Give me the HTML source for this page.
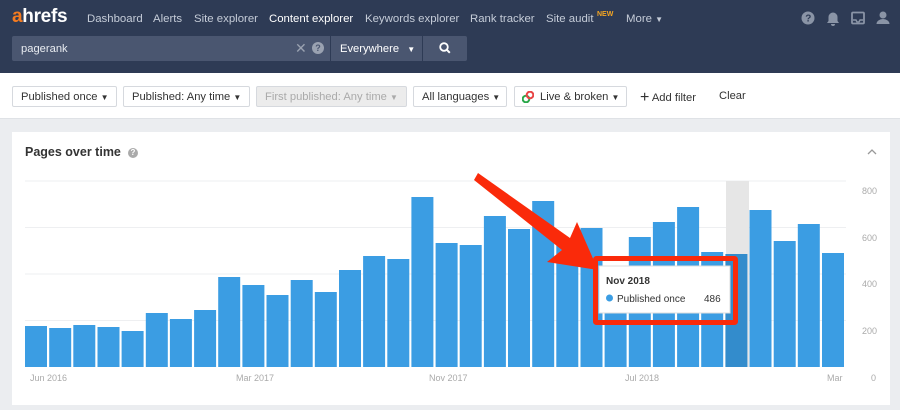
<!DOCTYPE html>
<html><head><meta charset="utf-8"><style>
*{box-sizing:border-box;margin:0;padding:0}
body{width:900px;height:410px;background:#ebedf0;font-family:"Liberation Sans",sans-serif;position:relative;overflow:hidden}
.nav{position:absolute;left:0;top:0;width:900px;height:73px;background:#2e3b55}
.nav .l{position:absolute;top:13px;font-size:11.4px;color:#c5ccd8;white-space:nowrap}
.logo{position:absolute;left:12px;top:6px;font-size:19px;font-weight:bold;color:#fff;letter-spacing:-0.3px}
.logo b{color:#f47b20}
.search{position:absolute;left:12px;top:36px;width:318px;height:25px;background:#4a5670;border-radius:2px 0 0 2px;color:#e8ebf0;font-size:11.2px;padding:7px 9px}
.ev{position:absolute;left:331px;top:36px;width:91px;height:25px;background:#4a5670;color:#fff;font-size:11.2px;padding:7px 9px;white-space:nowrap}
.sb{position:absolute;left:423px;top:36px;width:44px;height:25px;background:#4a5670;border-radius:0 2px 2px 0}
.fb{position:absolute;left:0;top:73px;width:900px;height:46px;background:#fff;border-bottom:1px solid #dfe2e6}
.f{position:absolute;top:13px;height:21px;border:1px solid #d6d9de;border-radius:2px;font-size:11.2px;color:#333;padding:4px 8px;background:#fff;white-space:nowrap}
.card{position:absolute;left:12px;top:132px;width:878px;height:273px;background:#fff}
.ax{font-size:9px;fill:#aaa;font-family:"Liberation Sans",sans-serif}
</style></head><body>
<div class="nav">
<div class="logo"><b>a</b>hrefs</div>
<div class="l" style="left:87px">Dashboard</div>
<div class="l" style="left:153px">Alerts</div>
<div class="l" style="left:194px">Site explorer</div>
<div class="l" style="left:269px;color:#fff">Content explorer</div>
<div class="l" style="left:365px">Keywords explorer</div>
<div class="l" style="left:470px">Rank tracker</div>
<div class="l" style="left:546px">Site audit</div>
<div style="position:absolute;left:597px;top:11px;font-size:7px;font-weight:bold;color:#f5a623">NEW</div>
<div class="l" style="left:626px">More <span style="font-size:8px">▼</span></div>
<svg style="position:absolute;left:800px;top:10px" width="92" height="18">
<circle cx="8" cy="8" r="6.5" fill="#8a94a6"/><text x="5.3" y="11.5" font-size="10" font-weight="bold" fill="#2e3b55" font-family="Liberation Sans">?</text>
<path d="M27 13h12l-1.5-2v-4a4.5 4.5 0 0 0-9 0v4z M31 14h4a2 2 0 0 1-4 0z" fill="#8a94a6"/>
<rect x="52" y="2.5" width="12" height="11" rx="1" fill="none" stroke="#8a94a6" stroke-width="1.8"/><path d="M53 10h3l1 2h2l1-2h3" fill="none" stroke="#8a94a6" stroke-width="1.5"/>
<circle cx="83" cy="5" r="3.5" fill="#8a94a6"/><path d="M76.5 14a6.5 5 0 0 1 13 0z" fill="#8a94a6"/>
</svg>
<div class="search">pagerank<span style="position:absolute;left:283px;top:4px;color:#9aa2b1;font-size:14px">✕</span><span style="position:absolute;left:300px;top:6px;width:12px;height:12px;border-radius:50%;background:#9aa2b1;color:#4a5670;font-size:9px;font-weight:bold;text-align:center;line-height:12px">?</span></div>
<div class="ev">Everywhere <span style="font-size:8px;margin-left:5px">▼</span></div>
<div class="sb"><svg width="44" height="25"><circle cx="21" cy="11" r="3.8" fill="none" stroke="#fff" stroke-width="1.8"/><path d="M23.8 13.8l3 3" stroke="#fff" stroke-width="2"/></svg></div>
</div>
<div class="fb">
<div class="f" style="left:12px;width:105px">Published once <span style="font-size:8px">▼</span></div>
<div class="f" style="left:123px;width:127px">Published: Any time <span style="font-size:8px">▼</span></div>
<div class="f" style="left:256px;width:151px;background:#ececec;color:#aaa">First published: Any time <span style="font-size:8px">▼</span></div>
<div class="f" style="left:413px;width:94px">All languages <span style="font-size:8px">▼</span></div>
<div class="f" style="left:514px;width:113px;padding-left:25px"><svg style="position:absolute;left:7px;top:4px" width="12" height="12"><circle cx="4" cy="8" r="3.3" fill="none" stroke="#2aa84a" stroke-width="2"/><circle cx="8" cy="4" r="3.3" fill="none" stroke="#e84545" stroke-width="2"/></svg>Live &amp; broken <span style="font-size:8px">▼</span></div>
<div style="position:absolute;left:640px;top:15px;font-size:11.2px;color:#333"><span style="font-size:16px;position:relative;top:1px">+</span> Add filter</div>
<div style="position:absolute;left:719px;top:17px;font-size:11.2px;color:#333">Clear</div>
</div>
<div class="card">
<div style="position:absolute;left:13px;top:13px;font-size:12.5px;font-weight:bold;color:#333">Pages over time</div>
<div style="position:absolute;left:116px;top:16px;width:10px;height:10px;border-radius:50%;background:#aaa;color:#fff;font-size:8px;text-align:center;line-height:10px;font-weight:bold">?</div>
<svg style="position:absolute;left:854px;top:16px" width="12" height="8"><path d="M2 6l4-4 4 4" fill="none" stroke="#999" stroke-width="1.3"/></svg>
</div>
<svg style="position:absolute;left:0;top:0" width="900" height="410">
<g stroke="#eeeff1" stroke-width="1"><line x1="25" x2="846" y1="181" y2="181"/><line x1="25" x2="846" y1="227.5" y2="227.5"/><line x1="25" x2="846" y1="274" y2="274"/><line x1="25" x2="846" y1="320.5" y2="320.5"/></g>
<rect x="726" y="181" width="23" height="186" fill="#e6e6e6"/>
<g fill="#3b9de3">
<rect x="25" y="326" width="22" height="41"/><rect x="49.2" y="328" width="22" height="39"/><rect x="73.3" y="325" width="22" height="42"/><rect x="97.5" y="327" width="22" height="40"/><rect x="121.6" y="331" width="22" height="36"/><rect x="145.8" y="313" width="22" height="54"/><rect x="169.9" y="319" width="22" height="48"/><rect x="194.1" y="310" width="22" height="57"/><rect x="218.2" y="277" width="22" height="90"/><rect x="242.4" y="285" width="22" height="82"/><rect x="266.5" y="295" width="22" height="72"/><rect x="290.7" y="280" width="22" height="87"/><rect x="314.8" y="292" width="22" height="75"/><rect x="339" y="270" width="22" height="97"/><rect x="363.1" y="256" width="22" height="111"/><rect x="387.3" y="259" width="22" height="108"/><rect x="411.4" y="197" width="22" height="170"/><rect x="435.6" y="243" width="22" height="124"/><rect x="459.7" y="245" width="22" height="122"/><rect x="483.9" y="216" width="22" height="151"/><rect x="508" y="229" width="22" height="138"/><rect x="532.2" y="201" width="22" height="166"/><rect x="556.3" y="240" width="22" height="127"/><rect x="580.5" y="228" width="22" height="139"/><rect x="604.6" y="300" width="22" height="67"/><rect x="628.8" y="237" width="22" height="130"/><rect x="652.9" y="222" width="22" height="145"/><rect x="677.1" y="207" width="22" height="160"/><rect x="701.2" y="252" width="22" height="115"/><rect x="749.5" y="210" width="22" height="157"/><rect x="773.7" y="241" width="22" height="126"/><rect x="797.8" y="224" width="22" height="143"/><rect x="822" y="253" width="22" height="114"/>
</g>
<rect x="725.4" y="254" width="22" height="113" fill="#338ccc"/>
<g class="ax"><text x="30" y="381">Jun 2016</text><text x="236" y="381">Mar 2017</text><text x="429" y="381">Nov 2017</text><text x="625" y="381">Jul 2018</text><text x="827" y="381">Mar</text>
<text x="862" y="194">800</text><text x="862" y="241">600</text><text x="862" y="287">400</text><text x="862" y="334">200</text><text x="871" y="381">0</text></g>
<rect x="599" y="266" width="131" height="47" fill="#fff" stroke="#ddd"/>
<text x="606" y="284" font-size="10" font-weight="bold" fill="#333" font-family="Liberation Sans">Nov 2018</text>
<circle cx="609.5" cy="298" r="3.5" fill="#3b9de3"/>
<text x="617" y="302" font-size="10" fill="#333" font-family="Liberation Sans">Published once</text>
<text x="704" y="302" font-size="10" fill="#333" font-family="Liberation Sans">486</text>
<rect x="595.5" y="258.5" width="140" height="64" fill="none" stroke="#fa2a0a" stroke-width="5" rx="1"/>
<path d="M474 180 L478 173 L570 238 L577 222 L598 270 L547 262 L562 250 Z" fill="#fa2a0a"/>
</svg>
</body></html>
